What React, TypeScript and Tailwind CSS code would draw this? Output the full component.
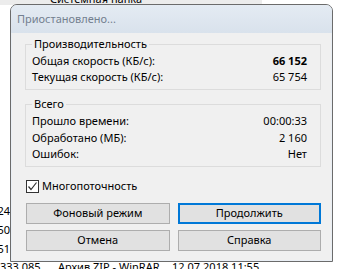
import React from 'react';

type Row = { label: string; value: string; bold?: boolean };

const perf: Row[] = [
  { label: 'Общая скорость (КБ/с):', value: '66 152', bold: true },
  { label: 'Текущая скорость (КБ/с):', value: '65 754' },
];

const total: Row[] = [
  { label: 'Прошло времени:', value: '00:00:33' },
  { label: 'Обработано (МБ):', value: '2 160' },
  { label: 'Ошибок:', value: 'Нет' },
];

const GroupBox: React.FC<{ title: string; rows: Row[]; rowClass: string; padClass: string }> = ({
  title,
  rows,
  rowClass,
  padClass,
}) => (
  <div className={`relative border border-[#dcdcdc] pl-[6px] pr-[13px] pt-[8px] ${padClass}`}>
    <span className="absolute left-[6px] top-[-9px] bg-[#f0f0f0] px-[2px] leading-[16px]">{title}</span>
    {rows.map((row, index) => (
      <div key={index} className={`flex justify-between leading-[16px] ${rowClass}`}>
        <span>{row.label}</span>
        <span className={row.bold ? 'font-bold' : ''}>{row.value}</span>
      </div>
    ))}
  </div>
);

const Button: React.FC<{ label: string; focused?: boolean }> = ({ label, focused }) => (
  <div
    className={`h-[21px] flex items-center justify-center bg-[#e1e1e1] ${
      focused ? 'border-2 border-[#0078d7]' : 'border border-[#adadad]'
    }`}
  >
    {label}
  </div>
);

export default function App() {
  return (
    <div
      className="relative w-[340px] h-[269px] overflow-hidden bg-white text-[11px] text-black"
      style={{ fontFamily: '"Noto Sans", "Liberation Sans", sans-serif' }}
    >
      {/* Explorer list behind the dialog */}
      <div className="h-[5px] w-[262px] bg-[#ececec] relative overflow-hidden">
        <span className="absolute left-[50px] top-[-9px] leading-[16px]">Системная папка</span>
      </div>
      <div className="mt-[196px] flex flex-col leading-[19px]">
        <span className="w-[10px] overflow-hidden flex justify-end">24</span>
        <span className="w-[10px] overflow-hidden flex justify-end">50</span>
        <span className="w-[10px] overflow-hidden flex justify-end">51</span>
        <div className="flex mt-[-1px]">
          <span className="w-[58px]">333 085</span>
          <span className="w-[114px]">Архив ZIP - WinRAR</span>
          <span>12.07.2018 11:55</span>
        </div>
      </div>

      {/* Dialog window */}
      <div className="absolute left-[10px] top-[4px] w-[323px] h-[258px] flex flex-col border border-[#6b6b6b] rounded-t-[7px] bg-[#e9eef4] overflow-hidden">
        <div className="h-[28px] shrink-0 flex items-center pl-[6px] bg-gradient-to-b from-[#e4ebf3] to-[#d9e2ec] text-[#74808f]">
          Приостановлено...
        </div>
        <div className="flex-1 mx-[1px] mb-[1px] bg-[#f0f0f0] pl-[13px] pr-[10px] pt-[11px] flex flex-col">
          <GroupBox title="Производительность" rows={perf} rowClass="h-[16px]" padClass="pb-[4px]" />
          <div className="h-[14px] shrink-0" />
          <GroupBox title="Всего" rows={total} rowClass="h-[16.5px]" padClass="pb-[3.5px]" />
          <label className="flex items-center mt-[12px] ml-[1px] h-[14px]">
            <span className="w-[13px] h-[13px] border border-[#333] bg-white flex items-center justify-center">
              <svg width="11" height="11" viewBox="0 0 11 11">
                <path d="M1.5 5.5 L4 8.5 L9.5 1.5" fill="none" stroke="#333" strokeWidth="1.2" />
              </svg>
            </span>
            <span className="ml-[3px]">Многопоточность</span>
          </label>
          <div className="grid grid-cols-2 gap-x-[8px] gap-y-[6px] mt-[10px] ml-[1px]">
            <Button label="Фоновый режим" />
            <Button label="Продолжить" focused />
            <Button label="Отмена" />
            <Button label="Справка" />
          </div>
        </div>
      </div>
    </div>
  );
}
